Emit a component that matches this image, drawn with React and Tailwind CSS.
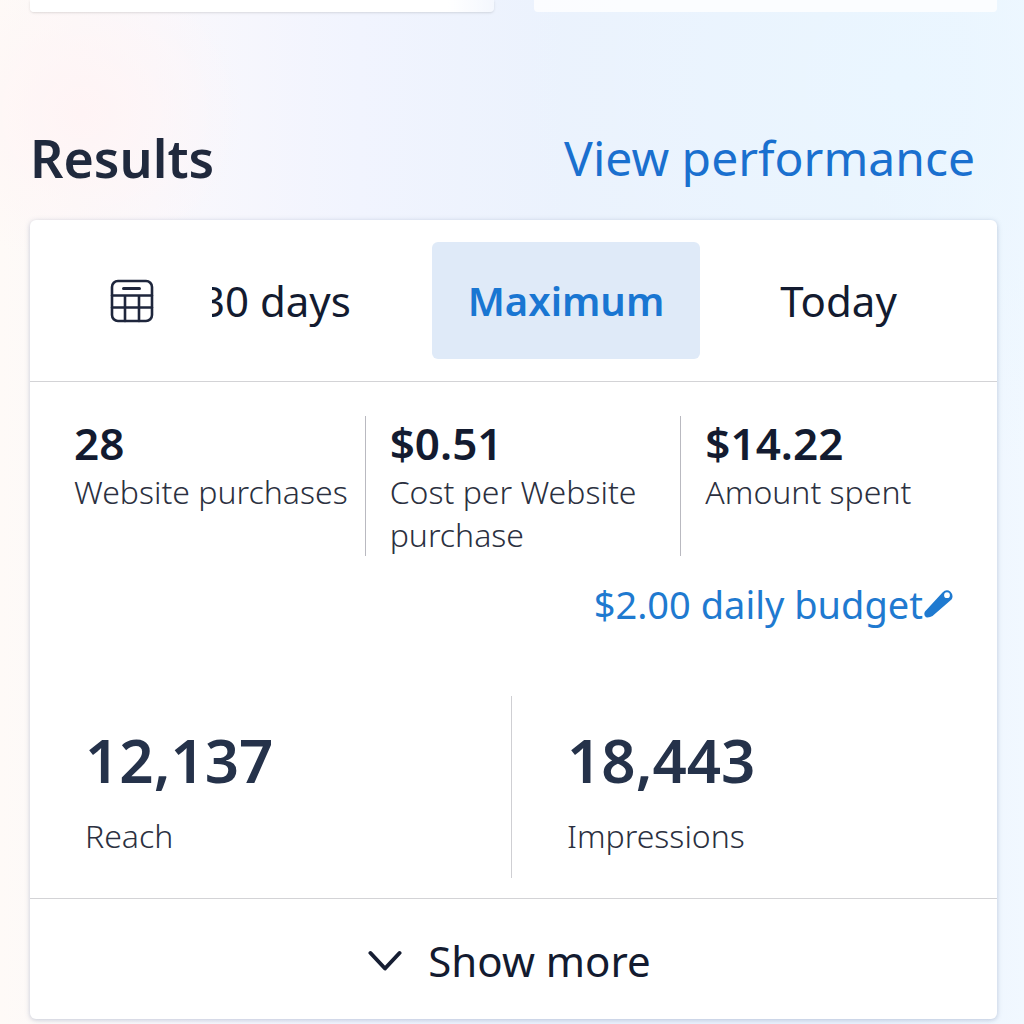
import React, { useState } from 'react'

const metrics = [
  { value: '28', label: 'Website purchases' },
  { value: '$0.51', label: 'Cost per Website purchase' },
  { value: '$14.22', label: 'Amount spent' },
]

const totals = [
  { value: '12,137', label: 'Reach' },
  { value: '18,443', label: 'Impressions' },
]

const CalendarIcon = () => (
  <svg width="44" height="44" viewBox="0 0 44 44" fill="none" stroke="#1e263c" strokeWidth="2.6" strokeLinecap="round" aria-hidden="true">
    <rect x="2" y="2" width="40" height="40" rx="6" />
    <path d="M2 16.5H42M2 28.5H42M15 16.5V42M29 16.5V42" />
    <path d="M13.5 9.500H29.500" strokeWidth="3" />
  </svg>
)

const PencilIcon = () => (
  <svg width="30" height="32" viewBox="0 0 30 32" aria-hidden="true">
    <path
      fill="#1f7ad0"
      fillRule="evenodd"
      d="M2 23.500L19.500 4.500Q23.500 .5 27.500 3.800Q31 7.500 28.500 11.500L9.500 28Q6.500 29.800 3 29.300Q.2 27 2 23.500ZM24 4.300A2.900 2.900 0 1 0 24 10.100A2.900 2.900 0 1 0 24 4.300Z"
    />
  </svg>
)

const ChevronIcon = () => (
  <svg width="34" height="22" viewBox="0 0 34 22" fill="none" stroke="#161e33" strokeWidth="4" strokeLinecap="round" strokeLinejoin="round" aria-hidden="true">
    <path d="M2.500 3L17 18.500L31.500 3" />
  </svg>
)

const RangeTabs = () => {
  const [range, setRange] = useState('Maximum')

  return (
    <div className="grid grid-cols-[402px_268px_1fr] items-center border-b border-[#d3d3d6] py-[22px]">
      <div className="flex items-center pl-20">
        <button type="button" aria-label="Choose dates">
          <CalendarIcon />
        </button>
        <button
          type="button"
          onClick={() => setRange('30 days')}
          className="ml-[58px] flex overflow-hidden whitespace-nowrap"
        >
          <span className="-ml-[11px]">30 days</span>
        </button>
      </div>
      <button
        type="button"
        aria-pressed={range === 'Maximum'}
        onClick={() => setRange('Maximum')}
        className="h-[117px] rounded-md bg-[#dfeaf8] text-[40px] font-semibold text-[#1976d2]"
      >
        Maximum
      </button>
      <button type="button" onClick={() => setRange('Today')} className="pr-5">
        Today
      </button>
    </div>
  )
}

const App = () => {
  return (
    <main className="min-h-screen bg-[radial-gradient(ellipse_at_8%_11%,#fff4f5_0%,#fff4f500_12%),radial-gradient(ellipse_at_88%_8%,#eaf6ff_0%,#eaf6ff00_30%),linear-gradient(90deg,#fefaf7_0%,#faf8fc_15%,#f1f4fe_35%,#ebf2fd_55%,#eaf2fd_85%,#f1f8ff_100%)] pr-[27px] pl-[30px] font-['Noto_Sans',sans-serif] text-[#131b30]">
      <div className="grid grid-cols-2 gap-10">
        <div className="h-3 rounded-b-sm bg-gradient-to-r from-white from-90% to-white/40 shadow-sm" />
        <div className="h-3 rounded-b-sm bg-white/80" />
      </div>

      <header className="flex items-center justify-between pt-[110px] pr-[22px] pb-[26px]">
        <h1 className="text-[52px] leading-[72px] font-semibold text-[#20293d]">Results</h1>
        <a href="#performance" className="text-[48px] leading-[72px] text-[#1a70cf]">
          View performance
        </a>
      </header>

      <section className="rounded-md bg-white text-[42px] leading-[56px] shadow-[0_1px_5px_rgba(90,110,150,0.35)]">
        <RangeTabs />

        <div className="grid grid-cols-3 pt-[34px] pl-5">
          {metrics.map((metric) => (
            <div
              key={metric.label}
              className="min-h-[139px] border-r border-[#b9b9c0] pr-1 pl-6 last:border-r-0"
            >
              <div className="text-[44px] leading-[54px] font-semibold">{metric.value}</div>
              <div className="text-[32px] leading-[43px] font-light text-[#2b3040]">{metric.label}</div>
            </div>
          ))}
        </div>

        <div className="flex justify-end pt-5 pr-[44px]">
          <button type="button" className="flex items-center text-[38px] text-[#1f7ad0]">
            $2.00 daily budget
            <PencilIcon />
          </button>
        </div>

        <div className="grid grid-cols-2 border-b border-[#d3d3d6] pt-16 pr-[3px] pb-5">
          {totals.map((total) => (
            <div
              key={total.label}
              className="h-[182px] border-r border-[#cfcfd3] pt-[22px] pl-[55px] last:border-r-0"
            >
              <div className="text-[60px] leading-[84px] font-semibold text-[#25324a]">{total.value}</div>
              <div className="pt-3 text-[32px] leading-[43px] font-light text-[#2b3040]">{total.label}</div>
            </div>
          ))}
        </div>

        <button type="button" className="flex w-full items-center justify-center gap-[26px] pt-[34px] pr-2 pb-[30px]">
          <ChevronIcon />
          Show more
        </button>
      </section>
    </main>
  )
}

export default App
